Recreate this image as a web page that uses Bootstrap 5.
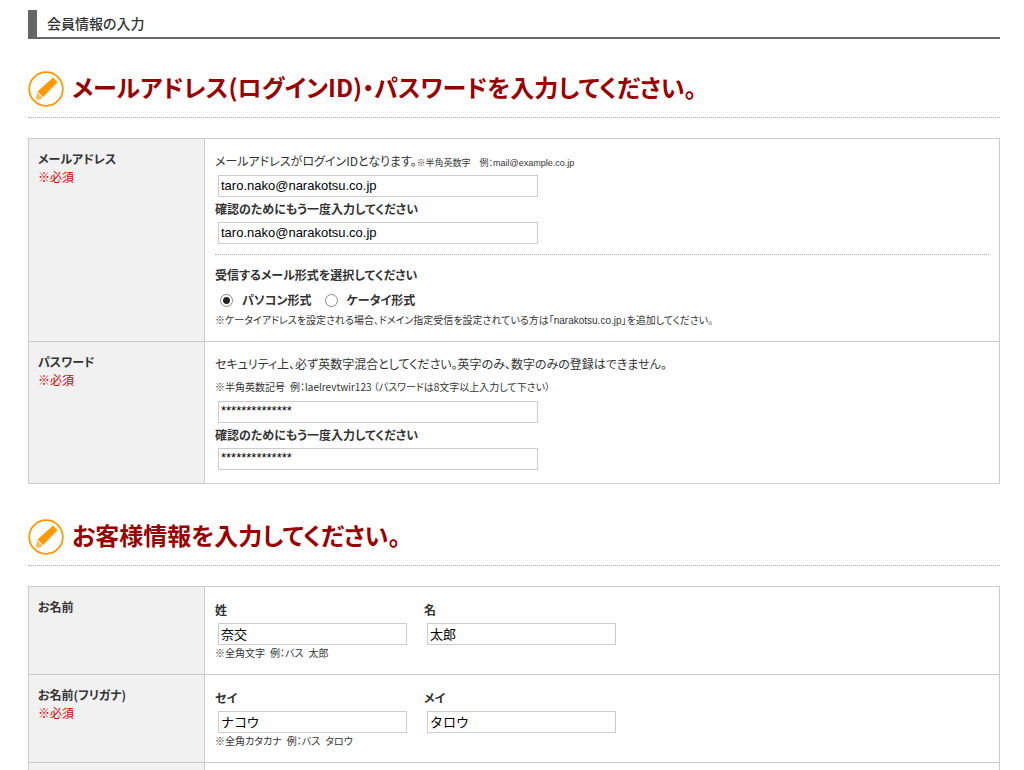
<!DOCTYPE html>
<html lang="ja">
<head>
<meta charset="utf-8">
<meta name="viewport" content="width=device-width, initial-scale=1">
<title>会員情報の入力</title>
<link href="https://cdn.jsdelivr.net/npm/bootstrap@5.3.0/dist/css/bootstrap.min.css" rel="stylesheet">
<style>
  body { font: 12px/20px "Noto Sans CJK JP", sans-serif; font-feature-settings: "palt"; color: #333; background: #fff; }
  .page { padding: 10px 24px 0 28px; }
  .page-title { font-size: 14px; line-height: 27px; font-weight: 500; border-left: 9px solid #666; border-bottom: 2px solid #666; padding-left: 10px; margin: 0 0 32px; }
  .section-title { font-size: 24px; line-height: 32px; font-weight: 700; color: #990000; gap: 8px; padding-bottom: 10px; border-bottom: 1px dotted #aaa; margin: 0 0 20px; }
  .section-title svg { width: 36px; height: 36px; flex: none; }
  .form-table { width: 100%; table-layout: fixed; border-collapse: collapse; margin-bottom: 35px; }
  .form-table th, .form-table td { border: 1px solid #ccc; vertical-align: top; }
  .form-table th { width: 176px; background: #f1f1f1; padding: 11px 9px; line-height: 18px; font-weight: 700; }
  .form-table td { padding: 12px 10px 11px; }
  .form-table .ends-in-field { padding-bottom: 13px; }
  .form-table .next-row th { padding: 4px; }
  .form-table .next-row td { padding: 0; }
  .required { color: #d00; font-weight: 400; }
  .note { font-family: "Liberation Sans", "Noto Sans CJK JP", sans-serif; font-size: 10px; line-height: 18px; }
  .note-tall { font-size: 10px; line-height: 22px; padding: 2px 0 3px; }
  .note-inline { font-family: "Liberation Sans", "Noto Sans CJK JP", sans-serif; font-size: 9px; line-height: 16px; }
  .field-label { display: block; font-weight: 700; line-height: 23px; padding-bottom: 2px; }
  .name-label { display: block; font-weight: 700; line-height: 22px; padding-bottom: 2px; }
  .field { display: block; width: 320px; max-width: 98%; height: 22px; margin-left: 3px; padding: 0 2px 2px; border: 1px solid #ccc; border-radius: 0; background: #fff; color: #000; font-family: "Liberation Sans", "Noto Sans CJK JP", sans-serif; font-size: 13px; line-height: 18px; }
  .field-masked { padding-bottom: 4px; }
  .name-col { width: 209px; }
  .name-col .field { width: 189px; }
  .rule { border-top: 1px dotted #aaa; margin: 10px 0 8px; }
  .choice { font-weight: 700; line-height: 24px; }
  .choice input { appearance: none; width: 13px; height: 13px; margin: 0 9px 0 5px; border: 1px solid #888; border-radius: 50%; background: #fff; }
  .choice input:checked { background: radial-gradient(circle, #222 0 3px, #fff 4px); }
</style>
</head>
<body>
<main class="page">
  <h1 class="page-title">会員情報の入力</h1>
  <form>
    <h2 class="section-title d-flex">
      <svg viewBox="0 0 36 36" aria-hidden="true"><circle cx="18" cy="18" r="16.800" fill="#fff" stroke="#f90" stroke-width="1.800"/><path d="M25 6.500 29.700 11.200 15 26 9.500 20.500Z" fill="#f90"/><path d="M9 21.300 14.200 26.500 13 28.300 9.200 28.800 7.800 27Z" fill="#fb5"/></svg>
      <span>メールアドレス(ログインID)・パスワードを入力してください。</span>
    </h2>
    <table class="form-table">
      <tr>
        <th scope="row">メールアドレス<br><span class="required">※必須</span></th>
        <td>
          <div class="mb-1"><label for="mail">メールアドレスがログインIDとなります。</label><span class="note-inline">※半角英数字&emsp;例：mail@example.co.jp</span></div>
          <input class="field" id="mail" type="text" value="taro.nako@narakotsu.co.jp">
          <label class="field-label" for="mail2">確認のためにもう一度入力してください</label>
          <input class="field" id="mail2" type="text" value="taro.nako@narakotsu.co.jp">
          <div class="rule"></div>
          <div class="field-label">受信するメール形式を選択してください</div>
          <div class="d-flex choice">
            <label class="d-flex align-items-center me-2"><input type="radio" name="format" checked>パソコン形式</label>
            <label class="d-flex align-items-center"><input type="radio" name="format">ケータイ形式</label>
          </div>
          <div class="note">※ケータイアドレスを設定される場合、ドメイン指定受信を設定されている方は「narakotsu.co.jp」を追加してください。</div>
        </td>
      </tr>
      <tr>
        <th scope="row">パスワード<br><span class="required">※必須</span></th>
        <td class="ends-in-field">
          <label class="d-block" for="pass">セキュリティ上、必ず英数字混合としてください。英字のみ、数字のみの登録はできません。</label>
          <div class="note-tall">※半角英数記号&ensp;例：laelrevtwir123 （パスワードは8文字以上入力して下さい）</div>
          <input class="field field-masked" id="pass" type="text" value="**************">
          <label class="field-label" for="pass2">確認のためにもう一度入力してください</label>
          <input class="field field-masked" id="pass2" type="text" value="**************">
        </td>
      </tr>
    </table>

    <h2 class="section-title d-flex">
      <svg viewBox="0 0 36 36" aria-hidden="true"><circle cx="18" cy="18" r="16.800" fill="#fff" stroke="#f90" stroke-width="1.800"/><path d="M25 6.500 29.700 11.200 15 26 9.500 20.500Z" fill="#f90"/><path d="M9 21.300 14.200 26.500 13 28.300 9.200 28.800 7.800 27Z" fill="#fb5"/></svg>
      <span>お客様情報を入力してください。</span>
    </h2>
    <table class="form-table mb-0">
      <tr>
        <th scope="row">お名前</th>
        <td>
          <div class="d-flex">
            <div class="name-col"><label class="name-label" for="sei">姓</label><input class="field" id="sei" type="text" value="奈交"></div>
            <div class="name-col"><label class="name-label" for="mei">名</label><input class="field" id="mei" type="text" value="太郎"></div>
          </div>
          <div class="note">※全角文字&ensp;例：バス&ensp;太郎</div>
        </td>
      </tr>
      <tr>
        <th scope="row">お名前(フリガナ)<br><span class="required">※必須</span></th>
        <td>
          <div class="d-flex">
            <div class="name-col"><label class="name-label" for="sei-kana">セイ</label><input class="field" id="sei-kana" type="text" value="ナコウ"></div>
            <div class="name-col"><label class="name-label" for="mei-kana">メイ</label><input class="field" id="mei-kana" type="text" value="タロウ"></div>
          </div>
          <div class="note">※全角カタカナ&ensp;例：バス&ensp;タロウ</div>
        </td>
      </tr>
      <tr class="next-row"><th></th><td></td></tr>
    </table>
  </form>
</main>
<script src="https://cdn.jsdelivr.net/npm/bootstrap@5.3.0/dist/js/bootstrap.bundle.min.js"></script>
</body>
</html>
